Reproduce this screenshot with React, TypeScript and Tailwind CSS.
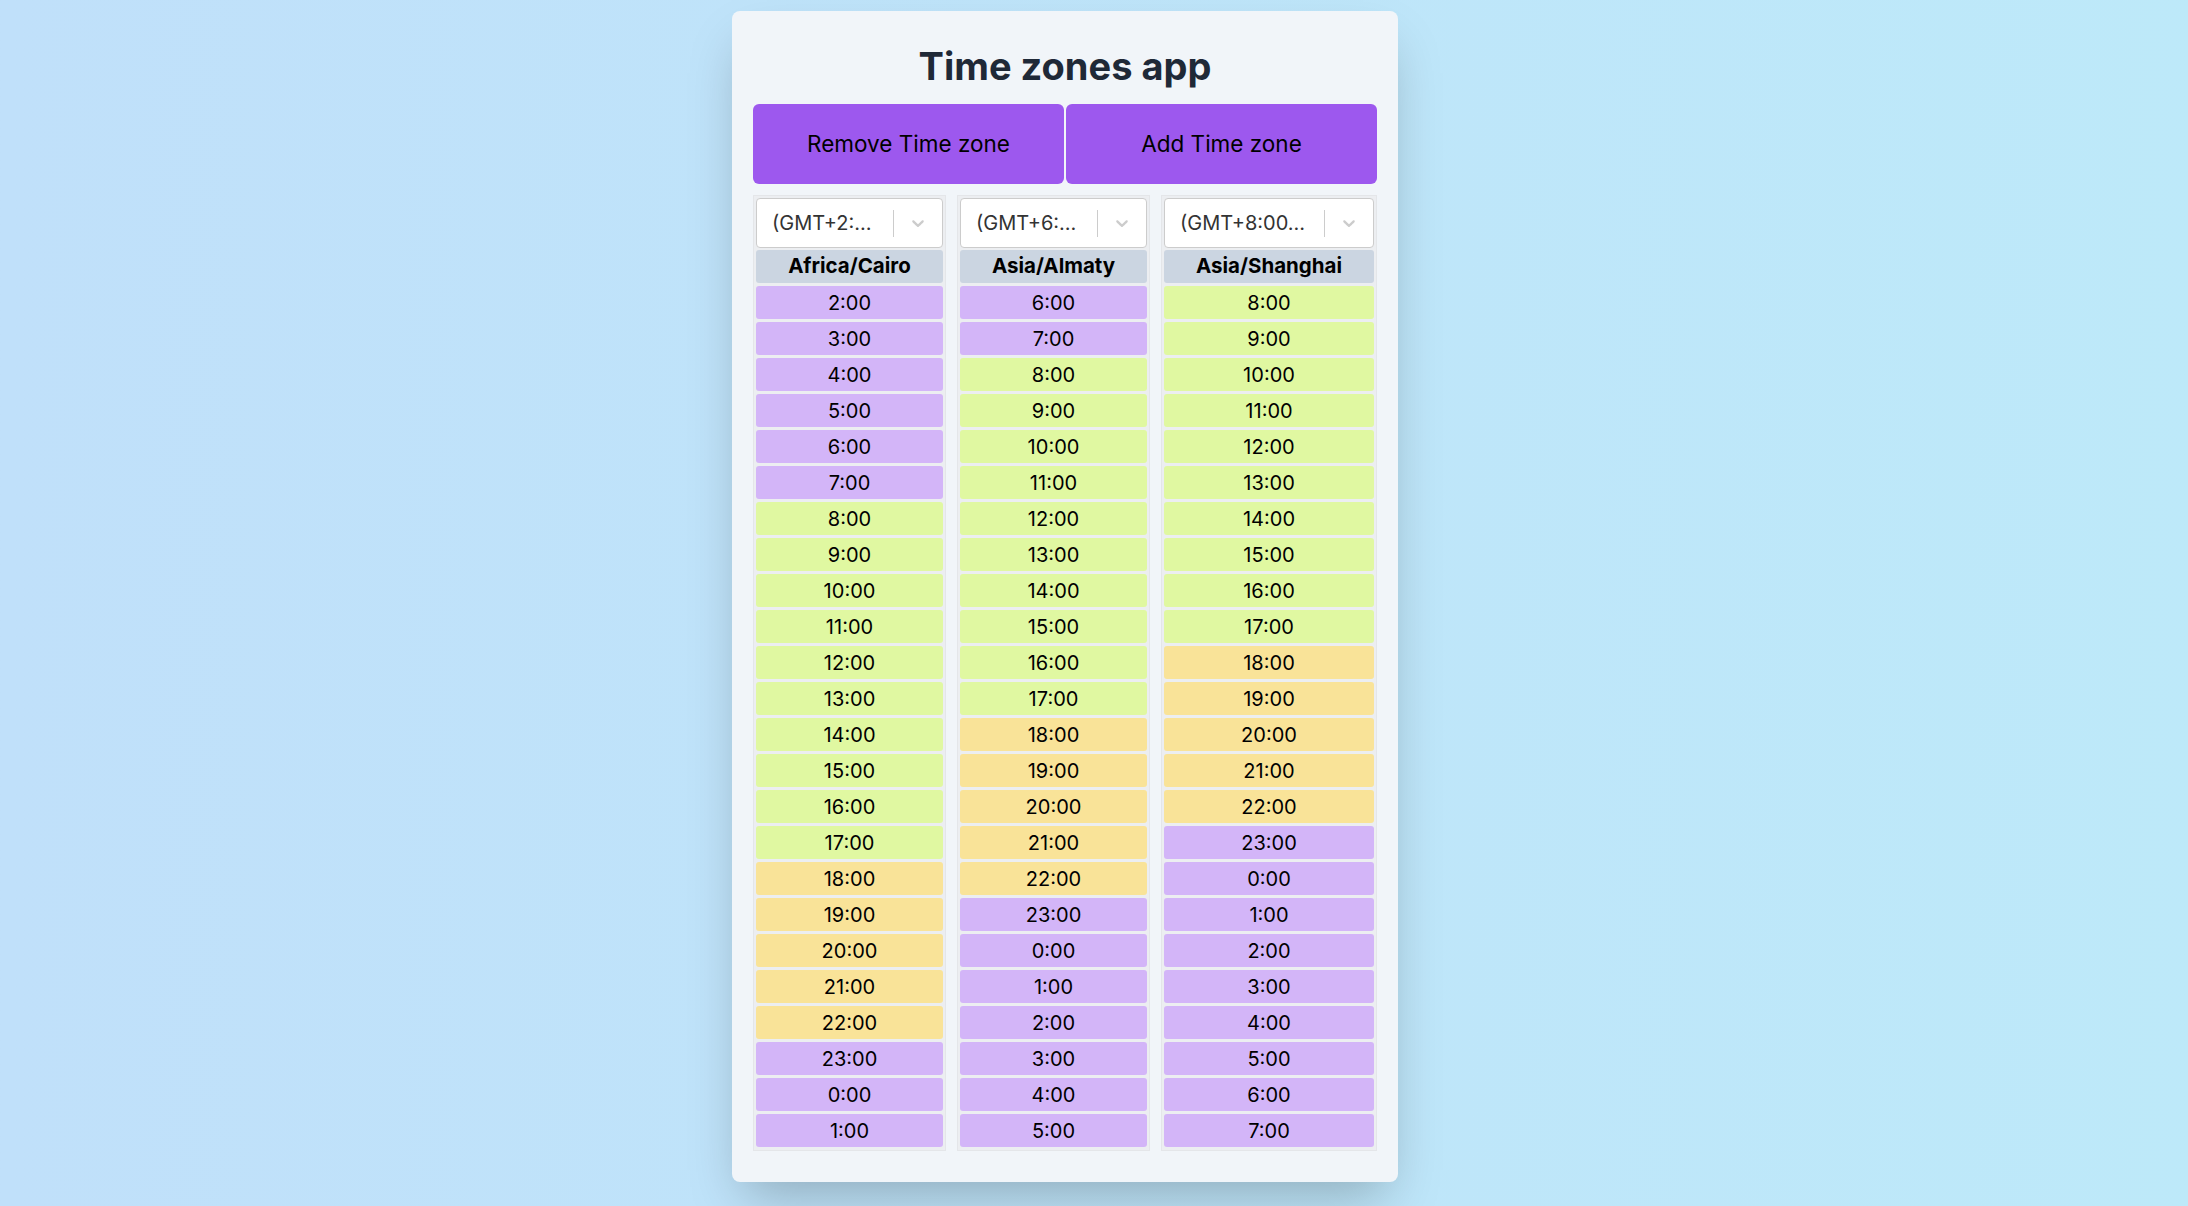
import React from 'react';

type Zone = {
  label: string;
  name: string;
  offset: number;
  width: string;
};

const zones: Zone[] = [
  { label: '(GMT+2:\u2026', name: 'Africa/Cairo', offset: 2, width: 'w-[193px]' },
  { label: '(GMT+6:\u2026', name: 'Asia/Almaty', offset: 6, width: 'w-[193px]' },
  { label: '(GMT+8:00\u2026', name: 'Asia/Shanghai', offset: 8, width: 'w-[216px]' },
];

// night / work / evening
const hourColor = (h: number) => {
  if (h >= 8 && h <= 17) return 'bg-[#e0f8a1]';
  if (h >= 18 && h <= 22) return 'bg-[#f9e398]';
  return 'bg-[#d3b5f8]';
};

const Chevron = () => (
  <svg viewBox="0 0 20 20" className="h-[20px] w-[20px] fill-[#cccccc]">
    <path d="M4.516 7.548c0.436-0.446 1.043-0.481 1.576 0l3.908 3.747 3.908-3.747c0.533-0.481 1.141-0.446 1.574 0 0.436 0.445 0.408 1.197 0 1.615-0.406 0.418-4.695 4.502-4.695 4.502-0.217 0.223-0.502 0.335-0.787 0.335s-0.57-0.112-0.789-0.335c0 0-4.287-4.084-4.695-4.502s-0.436-1.17 0-1.615z" />
  </svg>
);

const ZoneColumn: React.FC<{ zone: Zone }> = ({ zone }) => {
  const hours = Array.from({ length: 24 }, (_, i) => (i + zone.offset) % 24);
  return (
    <div className={`${zone.width} border border-[#e4e6e9] bg-[#eceef1] p-[2px] pb-[3px]`}>
      <div className="flex h-[50px] items-center rounded-[4px] border border-[#cccccc] bg-white">
        <span className="flex-1 truncate pl-[15px] text-[20px] text-[#333333]">{zone.label}</span>
        <span className="h-[27px] w-px bg-[#cccccc]" />
        <span className="flex w-[48px] justify-center">
          <Chevron />
        </span>
      </div>
      <div className="mt-[2px] flex h-[33px] items-center justify-center rounded-[3px] bg-[#cbd5e1] text-[20.5px] font-bold text-black">
        {zone.name}
      </div>
      {hours.map((h) => (
        <div
          key={h}
          className={`mt-[3px] flex h-[33px] items-center justify-center rounded-[3px] text-[20px] text-black ${hourColor(h)}`}
        >
          {h}:00
        </div>
      ))}
    </div>
  );
};

export default function App() {
  return (
    <div
      className="flex min-h-screen justify-center bg-gradient-to-r from-[#c0e0fa] to-[#bde9f9] pr-[58px] pt-[11px]"
      style={{ fontFamily: 'Inter, "Noto Sans", sans-serif' }}
    >
      <div className="h-fit w-[666px] rounded-[8px] bg-[#f1f5f9] px-[21px] pb-[31px] pt-[35px] shadow-2xl">
        <h1 className="mb-[17px] text-center text-[38px] font-bold leading-[41px] text-[#1f2937]">
          Time zones app
        </h1>
        <div className="flex gap-[2px]">
          <button className="h-[80px] flex-1 rounded-[6px] bg-[#9d58ee] text-[22.5px] text-black">
            Remove Time zone
          </button>
          <button className="h-[80px] flex-1 rounded-[6px] bg-[#9d58ee] text-[22.5px] text-black">
            Add Time zone
          </button>
        </div>
        <div className="mt-[11px] flex gap-[11px]">
          {zones.map((z) => (
            <ZoneColumn key={z.name} zone={z} />
          ))}
        </div>
      </div>
    </div>
  );
}
